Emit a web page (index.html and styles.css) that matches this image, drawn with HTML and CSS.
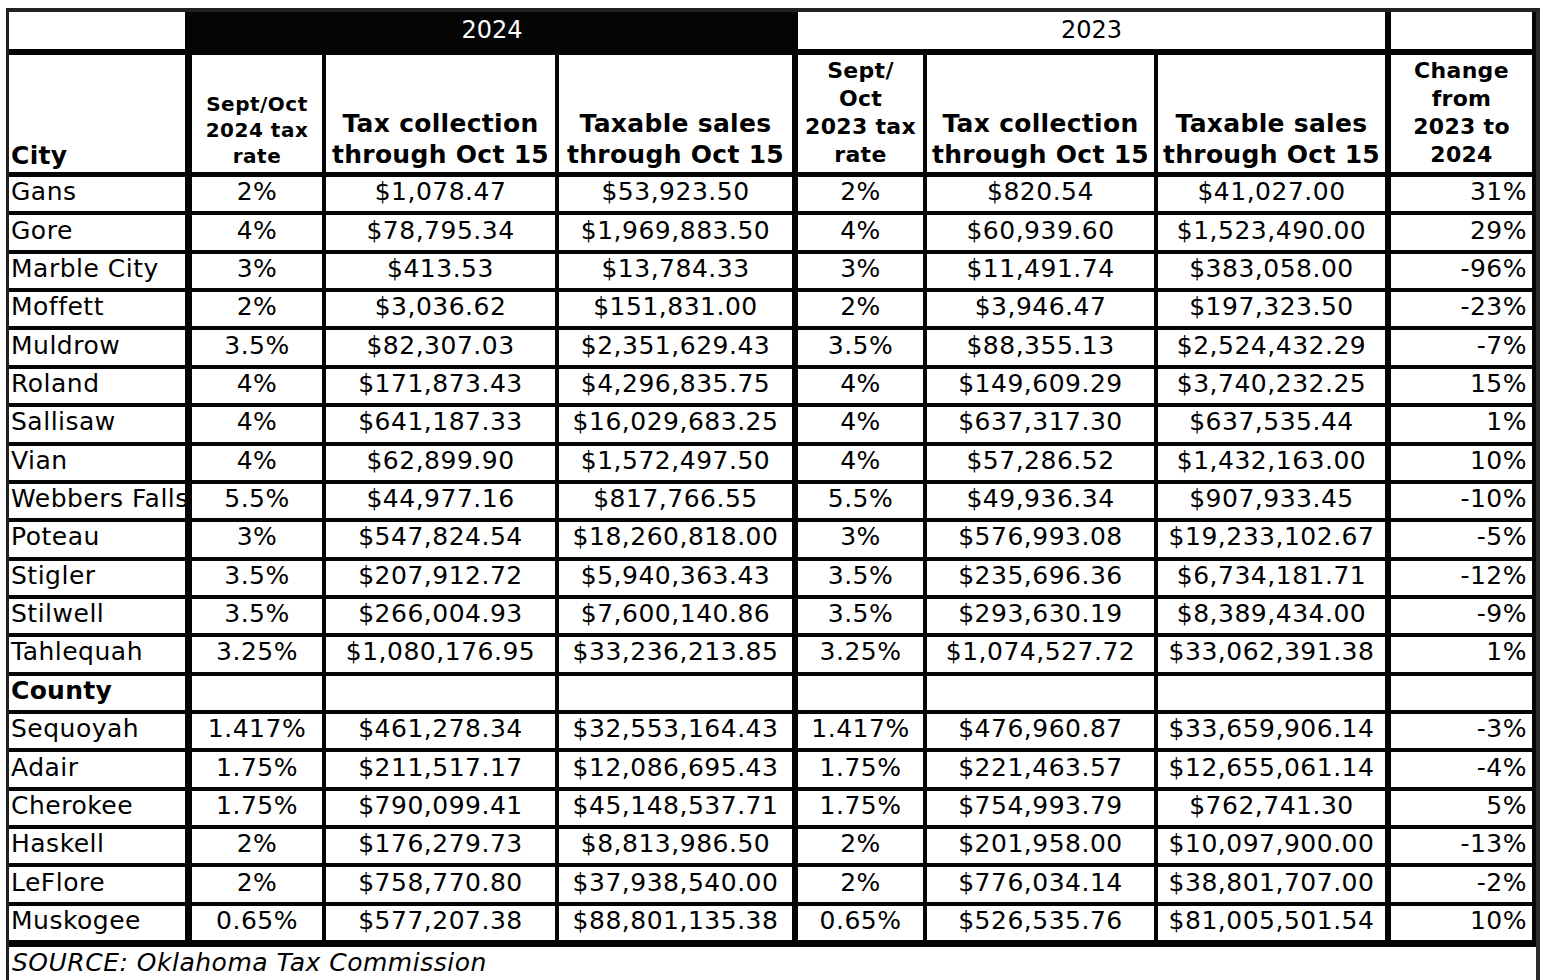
FILE: index.html
```html
<!DOCTYPE html>
<html>
<head>
<meta charset="utf-8">
<title>Sales tax collections</title>
<link rel="stylesheet" href="styles.css">
</head>
<body>
<table class="tax">
  <colgroup>
    <col class="w1"><col class="w2"><col class="w3"><col class="w4"><col class="w5"><col class="w6"><col class="w7"><col class="w8">
  </colgroup>
  <thead>
    <tr class="yr">
      <th class="c1 blank"></th>
      <th class="y2024" colspan="3">2024</th>
      <th class="y2023" colspan="3">2023</th>
      <th class="c8 blank"></th>
    </tr>
    <tr class="hd">
      <th class="c1 city">City</th>
      <th class="c2 small">Sept/Oct<br>2024 tax<br>rate</th>
      <th class="c3 big">Tax collection<br>through Oct 15</th>
      <th class="c4 big">Taxable sales<br>through Oct 15</th>
      <th class="c5 mid">Sept/<br>Oct<br>2023 tax<br>rate</th>
      <th class="c6 big">Tax collection<br>through Oct 15</th>
      <th class="c7 big">Taxable sales<br>through Oct 15</th>
      <th class="c8 mid">Change<br>from<br>2023 to<br>2024</th>
    </tr>
  </thead>
  <tbody>
    <tr class="row"><td class="c1">Gans</td><td class="c2">2%</td><td class="c3">$1,078.47</td><td class="c4">$53,923.50</td><td class="c5">2%</td><td class="c6">$820.54</td><td class="c7">$41,027.00</td><td class="c8">31%</td></tr>
    <tr class="row"><td class="c1">Gore</td><td class="c2">4%</td><td class="c3">$78,795.34</td><td class="c4">$1,969,883.50</td><td class="c5">4%</td><td class="c6">$60,939.60</td><td class="c7">$1,523,490.00</td><td class="c8">29%</td></tr>
    <tr class="row"><td class="c1">Marble City</td><td class="c2">3%</td><td class="c3">$413.53</td><td class="c4">$13,784.33</td><td class="c5">3%</td><td class="c6">$11,491.74</td><td class="c7">$383,058.00</td><td class="c8">-96%</td></tr>
    <tr class="row"><td class="c1">Moffett</td><td class="c2">2%</td><td class="c3">$3,036.62</td><td class="c4">$151,831.00</td><td class="c5">2%</td><td class="c6">$3,946.47</td><td class="c7">$197,323.50</td><td class="c8">-23%</td></tr>
    <tr class="row"><td class="c1">Muldrow</td><td class="c2">3.5%</td><td class="c3">$82,307.03</td><td class="c4">$2,351,629.43</td><td class="c5">3.5%</td><td class="c6">$88,355.13</td><td class="c7">$2,524,432.29</td><td class="c8">-7%</td></tr>
    <tr class="row"><td class="c1">Roland</td><td class="c2">4%</td><td class="c3">$171,873.43</td><td class="c4">$4,296,835.75</td><td class="c5">4%</td><td class="c6">$149,609.29</td><td class="c7">$3,740,232.25</td><td class="c8">15%</td></tr>
    <tr class="row"><td class="c1">Sallisaw</td><td class="c2">4%</td><td class="c3">$641,187.33</td><td class="c4">$16,029,683.25</td><td class="c5">4%</td><td class="c6">$637,317.30</td><td class="c7">$637,535.44</td><td class="c8">1%</td></tr>
    <tr class="row"><td class="c1">Vian</td><td class="c2">4%</td><td class="c3">$62,899.90</td><td class="c4">$1,572,497.50</td><td class="c5">4%</td><td class="c6">$57,286.52</td><td class="c7">$1,432,163.00</td><td class="c8">10%</td></tr>
    <tr class="row"><td class="c1">Webbers Falls</td><td class="c2">5.5%</td><td class="c3">$44,977.16</td><td class="c4">$817,766.55</td><td class="c5">5.5%</td><td class="c6">$49,936.34</td><td class="c7">$907,933.45</td><td class="c8">-10%</td></tr>
    <tr class="row"><td class="c1">Poteau</td><td class="c2">3%</td><td class="c3">$547,824.54</td><td class="c4">$18,260,818.00</td><td class="c5">3%</td><td class="c6">$576,993.08</td><td class="c7">$19,233,102.67</td><td class="c8">-5%</td></tr>
    <tr class="row"><td class="c1">Stigler</td><td class="c2">3.5%</td><td class="c3">$207,912.72</td><td class="c4">$5,940,363.43</td><td class="c5">3.5%</td><td class="c6">$235,696.36</td><td class="c7">$6,734,181.71</td><td class="c8">-12%</td></tr>
    <tr class="row"><td class="c1">Stilwell</td><td class="c2">3.5%</td><td class="c3">$266,004.93</td><td class="c4">$7,600,140.86</td><td class="c5">3.5%</td><td class="c6">$293,630.19</td><td class="c7">$8,389,434.00</td><td class="c8">-9%</td></tr>
    <tr class="row"><td class="c1">Tahlequah</td><td class="c2">3.25%</td><td class="c3">$1,080,176.95</td><td class="c4">$33,236,213.85</td><td class="c5">3.25%</td><td class="c6">$1,074,527.72</td><td class="c7">$33,062,391.38</td><td class="c8">1%</td></tr>
    <tr class="row"><td class="c1 county">County</td><td class="c2"></td><td class="c3"></td><td class="c4"></td><td class="c5"></td><td class="c6"></td><td class="c7"></td><td class="c8"></td></tr>
    <tr class="row"><td class="c1">Sequoyah</td><td class="c2">1.417%</td><td class="c3">$461,278.34</td><td class="c4">$32,553,164.43</td><td class="c5">1.417%</td><td class="c6">$476,960.87</td><td class="c7">$33,659,906.14</td><td class="c8">-3%</td></tr>
    <tr class="row"><td class="c1">Adair</td><td class="c2">1.75%</td><td class="c3">$211,517.17</td><td class="c4">$12,086,695.43</td><td class="c5">1.75%</td><td class="c6">$221,463.57</td><td class="c7">$12,655,061.14</td><td class="c8">-4%</td></tr>
    <tr class="row"><td class="c1">Cherokee</td><td class="c2">1.75%</td><td class="c3">$790,099.41</td><td class="c4">$45,148,537.71</td><td class="c5">1.75%</td><td class="c6">$754,993.79</td><td class="c7">$762,741.30</td><td class="c8">5%</td></tr>
    <tr class="row"><td class="c1">Haskell</td><td class="c2">2%</td><td class="c3">$176,279.73</td><td class="c4">$8,813,986.50</td><td class="c5">2%</td><td class="c6">$201,958.00</td><td class="c7">$10,097,900.00</td><td class="c8">-13%</td></tr>
    <tr class="row"><td class="c1">LeFlore</td><td class="c2">2%</td><td class="c3">$758,770.80</td><td class="c4">$37,938,540.00</td><td class="c5">2%</td><td class="c6">$776,034.14</td><td class="c7">$38,801,707.00</td><td class="c8">-2%</td></tr>
    <tr class="row last"><td class="c1">Muskogee</td><td class="c2">0.65%</td><td class="c3">$577,207.38</td><td class="c4">$88,801,135.38</td><td class="c5">0.65%</td><td class="c6">$526,535.76</td><td class="c7">$81,005,501.54</td><td class="c8">10%</td></tr>
    <tr class="src"><td colspan="8">SOURCE: Oklahoma Tax Commission</td></tr>
  </tbody>
</table>
</body>
</html>
```

FILE: styles.css
```css
html, body {
  margin: 0;
  padding: 0;
  background: #ffffff;
  overflow: hidden;
}

.tax {
  margin: 8px 0 0 6px;
  border-collapse: separate;
  border-spacing: 0;
  table-layout: fixed;
  width: 1534px;
  border-left: 3px solid #202020;
  border-top: 4px solid #222222;
  border-right: 4px solid #2a2a2a;
  font-family: "DejaVu Sans", Verdana, sans-serif;
  color: #000;
}

.w1 { width: 183px; }
.w2 { width: 134px; }
.w3 { width: 233px; }
.w4 { width: 239px; }
.w5 { width: 129px; }
.w6 { width: 231px; }
.w7 { width: 233px; }
.w8 { width: 145px; }

th, td {
  padding: 0;
  box-sizing: border-box;
  border-color: #050505;
  border-style: solid;
  border-width: 0 4px 4px 0;
  white-space: nowrap;
  overflow: hidden;
}

.c1 { border-right-width: 7px; text-align: left; padding-left: 2px; }
.c4, .c7 { border-right-width: 6px; }

/* year row */
.yr { height: 43px; }
.yr th {
  border-bottom-width: 6px;
  font-weight: normal;
  font-size: 24px;
  vertical-align: middle;
  padding-bottom: 2px;
}
.yr .y2024 {
  background: #050505;
  color: #ffffff;
  border-right-width: 6px;
  padding-left: 0;
}
.yr .y2023 {
  background: #ffffff;
  border-right-width: 6px;
}

/* header row */
.hd { height: 122px; }
.hd th {
  border-bottom-width: 5px;
  vertical-align: bottom;
  text-align: center;
  font-weight: bold;
  padding-bottom: 2px;
}
.hd .city {
  text-align: left;
  font-size: 25px;
  line-height: 31px;
  padding-bottom: 1px;
  letter-spacing: 0.3px;
}
.hd .small {
  font-size: 20px;
  line-height: 26px;
  padding-bottom: 3px;
  letter-spacing: 0.5px;
}
.hd .big {
  font-size: 25px;
  line-height: 31px;
  padding-bottom: 2px;
  letter-spacing: 0.3px;
}
.hd .mid {
  font-size: 22px;
  line-height: 28px;
  padding-bottom: 3px;
  letter-spacing: 0.3px;
}

/* data rows */
.row { height: 38.37px; }
.row td {
  font-size: 25px;
  line-height: 30px;
  text-align: center;
  vertical-align: middle;
  padding-bottom: 4px;
  letter-spacing: 0.5px;
}
.row td.c1 { text-align: left; }
.row td.c8 { text-align: right; padding-right: 5px; }
.row td.county { font-weight: bold; letter-spacing: 0.3px; }
.row.last td { border-bottom-width: 7px; }

/* source */
.src { height: 40px; }
.src td {
  border: 0;
  font-size: 25px;
  font-style: italic;
  text-align: left;
  padding: 0 0 8px 3px;
  vertical-align: middle;
  letter-spacing: 0.5px;
}
```
